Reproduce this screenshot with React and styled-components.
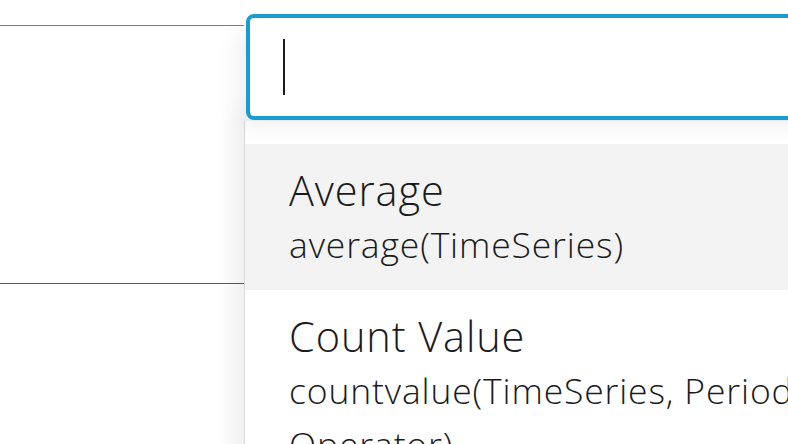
import React from "react";
import styled, { createGlobalStyle } from "styled-components";

const GlobalStyle = createGlobalStyle`
  html, body {
    margin: 0;
    padding: 0;
    background: #ffffff;
  }
  body {
    font-family: "Open Sans", "Noto Sans", sans-serif;
    color: #1b1b1b;
  }
`;

const options = [
  { title: "Average", signature: "average(TimeSeries)" },
  { title: "Count Value", signature: "countvalue(TimeSeries, Period, Operator)" },
];

const Page = styled.div`
  display: flex;
  width: 788px;
  height: 444px;
  overflow: hidden;
  background: #fff;
`;

const Grid = styled.div`
  width: 244px;
  flex-shrink: 0;
  display: flex;
  flex-direction: column;
`;

const GridRow = styled.div`
  height: ${(p) => p.$height}px;
  border-bottom: 1px solid ${(p) => p.$line};
`;

const Combo = styled.div`
  flex: 1;
  min-width: 0;
  display: flex;
  flex-direction: column;
`;

const Field = styled.div`
  box-sizing: border-box;
  flex-shrink: 0;
  margin: 14px -100px 0 2px;
  height: 106px;
  border: 4px solid #1b9bd3;
  border-radius: 8px;
  background: #fff;
  display: flex;
  align-items: center;
  padding-left: 33px;
  position: relative;
  z-index: 1;
  box-shadow: -16px 12px 22px -8px rgba(0, 0, 0, 0.07);
`;

const Caret = styled.span`
  display: block;
  width: 2px;
  height: 56px;
  background: #1a1a1a;
`;

const Menu = styled.ul`
  list-style: none;
  margin: 1px -100px 0 0;
  padding: 23px 0 0;
  flex: 1;
  border-left: 1px solid #d9d9d9;
  background: #fff;
  box-shadow: -10px -4px 22px rgba(0, 0, 0, 0.07);
`;

const Option = styled.li`
  padding: 20px 0 19px 44px;
  background: ${(p) => (p.$active ? "#f3f3f3" : "transparent")};
`;

const Title = styled.div`
  font-size: 41.5px;
  line-height: 52px;
  font-weight: 300;
  letter-spacing: 0.9px;
  white-space: nowrap;
`;

const Signature = styled.div`
  font-size: 35.5px;
  line-height: 54px;
  font-weight: 300;
  letter-spacing: 0.85px;
  margin-top: 1px;
`;

export default function App() {
  return (
    <>
      <GlobalStyle />
      <Page>
        <Grid>
          <GridRow $height={25} $line="#7c7c7c" />
          <GridRow $height={257} $line="#5a5a5a" />
        </Grid>
        <Combo>
          <Field>
            <Caret />
          </Field>
          <Menu>
            {options.map((o, i) => (
              <Option key={o.title} $active={i === 0}>
                <Title>{o.title}</Title>
                <Signature>{o.signature}</Signature>
              </Option>
            ))}
          </Menu>
        </Combo>
      </Page>
    </>
  );
}
